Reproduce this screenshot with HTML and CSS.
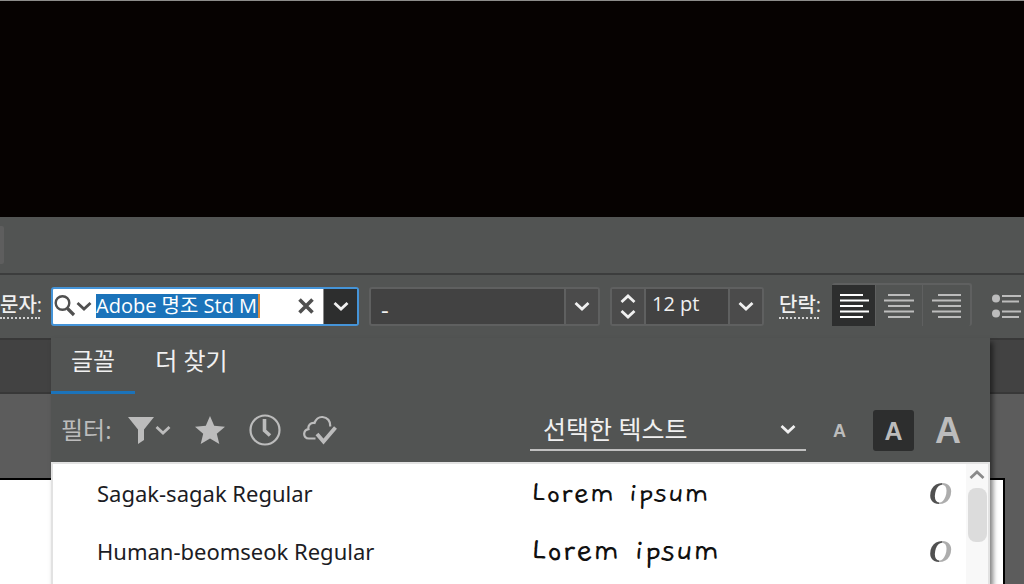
FILE: index.html
```html
<!DOCTYPE html>
<html lang="ko">
<head>
    <meta charset="UTF-8">
    <meta name="viewport" content="width=device-width, initial-scale=1.0">
    <title>글꼴</title>
    <link rel="stylesheet" href="styles.css">
</head>
<body>
    <svg class="defs" aria-hidden="true">
        <symbol id="down" viewBox="0 0 16 10">
            <path d="M1.5 2L8 8L14.5 2" fill="none" stroke="currentColor" stroke-width="2.8"/>
        </symbol>
        <symbol id="up" viewBox="0 0 16 10">
            <path d="M1.5 8L8 2L14.5 8" fill="none" stroke="currentColor" stroke-width="2.8"/>
        </symbol>
    </svg>
    <div class="backdrop"></div>
    <div class="appbar"><span class="handle"></span></div>
    <div class="toolbar">
        <label class="caption" for="font">문자:</label>
        <div class="field search">
            <button class="find" aria-label="검색 옵션">
                <svg width="22" height="24" viewBox="0 0 22 24" fill="none" stroke="#505050">
                    <circle cx="8.5" cy="9" r="6.8" stroke-width="2.4"/>
                    <path d="M13.5 14.5L20 21" stroke-width="3.2"/>
                </svg>
                <svg width="16" height="10"><use href="#down"/></svg>
            </button>
            <input class="font-name" id="font" type="text" value="Adobe 명조 Std M">
            <button class="clear" aria-label="지우기">
                <svg width="16" height="16" viewBox="0 0 16 16"><path d="M1.5 1.5L14.5 14.5M14.5 1.5L1.5 14.5" stroke="#505050" stroke-width="3.6"/></svg>
            </button>
            <button class="drop dark" aria-label="글꼴 목록"><svg width="16" height="10"><use href="#down"/></svg></button>
        </div>
        <div class="field style">
            <select aria-label="글꼴 스타일"><option>-</option></select>
            <span class="drop"><svg width="16" height="10"><use href="#down"/></svg></span>
        </div>
        <div class="field size">
            <div class="stepper">
                <button aria-label="크게"><svg width="16" height="10"><use href="#up"/></svg></button>
                <button aria-label="작게"><svg width="16" height="10"><use href="#down"/></svg></button>
            </div>
            <input type="text" value="12 pt" aria-label="글꼴 크기">
            <button class="drop" aria-label="크기 목록"><svg width="16" height="10"><use href="#down"/></svg></button>
        </div>
        <a class="caption" href="#">단락:</a>
        <div class="align">
            <button class="on" aria-label="왼쪽 정렬">
                <svg width="30" height="26" viewBox="0 0 30 26"><path d="M1 2H24M1 7.5H30M1 13H24M1 18.5H30M1 24H24" stroke="currentColor" stroke-width="2"/></svg>
            </button>
            <button aria-label="가운데 정렬">
                <svg width="30" height="26" viewBox="0 0 30 26"><path d="M4 2H26M0 7.5H30M4 13H26M0 18.5H30M4 24H26" stroke="currentColor" stroke-width="2"/></svg>
            </button>
            <button aria-label="오른쪽 정렬">
                <svg width="30" height="26" viewBox="0 0 30 26"><path d="M6 2H29M0 7.5H29M6 13H29M0 18.5H29M6 24H29" stroke="currentColor" stroke-width="2"/></svg>
            </button>
        </div>
        <button class="bullets" aria-label="글머리 기호">
            <svg width="30" height="26" viewBox="0 0 30 26">
                <g fill="currentColor"><circle cx="4" cy="5.5" r="4"/><circle cx="4" cy="20.5" r="4"/></g>
                <path d="M10 3H29M10 8.5H27M10 18.5H29M10 24H27" stroke="currentColor" stroke-width="2"/>
            </svg>
        </button>
    </div>
    <main class="workspace">
        <div class="doc-tabs"></div>
        <div class="canvas"><div class="artboard"></div></div>
        <section class="panel">
            <nav class="tabs">
                <a class="active" href="#fonts">글꼴</a>
                <a href="#more">더 찾기</a>
            </nav>
            <div class="filters">
                <span class="filter-label">필터:</span>
                <button class="funnel" aria-label="분류">
                    <svg width="26" height="28" viewBox="0 0 26 28"><path d="M0 1H26L16 13.5V24L10 28V13.5Z" fill="currentColor"/></svg>
                    <svg width="16" height="10"><use href="#down"/></svg>
                </button>
                <button class="star" aria-label="즐겨찾기">
                    <svg width="30" height="28" viewBox="0 0 30 28"><path d="M15 0L19.2 9.7L30 10.7L21.8 17.7L24.3 28L15 22.5L5.7 28L8.2 17.7L0 10.7L10.8 9.7Z" fill="currentColor"/></svg>
                </button>
                <button class="clock" aria-label="최근 사용">
                    <svg width="32" height="32" viewBox="0 0 32 32" fill="none" stroke="currentColor">
                        <circle cx="16" cy="16" r="14.5" stroke-width="2.2"/>
                        <path d="M15.5 5V16.5L21 21.5" stroke-width="3.6"/>
                    </svg>
                </button>
                <button class="cloud" aria-label="활성화됨">
                    <svg width="34" height="30" viewBox="0 0 34 30" fill="none" stroke="currentColor">
                        <path d="M12.5 23.5H6C2.5 23.5 1 21 1.2 18.5C1.5 16 3.5 14.5 5.5 14.2C4.7 10.5 7.500 7.500 11.500 8C13 4 16 1.8 19.5 2C24.5 2.2 27.5 6 27.2 11.5" stroke-width="2.2"/>
                        <path d="M14 19L20.5 26.5L32.5 12.5" stroke-width="3.8"/>
                    </svg>
                </button>
                <div class="sample-pick">
                    <select aria-label="샘플 텍스트"><option>선택한 텍스트</option></select>
                    <svg width="16" height="10"><use href="#down"/></svg>
                </div>
                <div class="zoom">
                    <button class="small" aria-label="작은 샘플">A</button>
                    <button class="medium" aria-label="중간 샘플">A</button>
                    <button class="large" aria-label="큰 샘플">A</button>
                </div>
            </div>
            <div class="list">
                <ul>
                    <li><span>Sagak-sagak Regular</span><span class="sample">Lorem ipsum</span><i>O</i></li>
                    <li><span>Human-beomseok Regular</span><span class="sample heavy">Lorem ipsum</span><i>O</i></li>
                </ul>
                <div class="scrollbar">
                    <svg width="16" height="10"><use href="#up"/></svg>
                    <div class="thumb"></div>
                </div>
            </div>
        </section>
    </main>
</body>
</html>
```
FILE: styles.css
```css
* {
    box-sizing: border-box;
}
body {
    margin: 0;
    height: 100vh;
    display: flex;
    flex-direction: column;
    overflow: hidden;
    font-family: "Open Sans", "Noto Sans CJK KR", sans-serif;
    color: #f0f0f0;
    background: #525453;
}
button, input, select {
    margin: 0;
    padding: 0;
    border: 0;
    border-radius: 0;
    background: none;
    color: inherit;
    font-family: inherit;
    appearance: none;
    outline: none;
}
button {
    display: flex;
    align-items: center;
    justify-content: center;
}
svg {
    display: block;
    flex: none;
}
.defs {
    position: absolute;
    width: 0;
    height: 0;
}
.backdrop {
    flex: none;
    height: 217px;
    background: #060201;
    border-top: 1px solid #8c8c8a;
}
.appbar {
    flex: none;
    height: 56px;
    display: flex;
    align-items: center;
}
.handle {
    width: 4px;
    height: 38px;
    background: #5e5e5e;
    border-radius: 0 2px 2px 0;
}

/* control bar */
.toolbar {
    flex: none;
    height: 65px;
    display: flex;
    align-items: center;
    padding-bottom: 1px;
    border-top: 2px solid #3c3d3d;
}
.caption {
    flex: none;
    width: 40px;
    margin-right: 11px;
    font-size: 20px;
    line-height: 24px;
    font-weight: 500;
    white-space: nowrap;
    color: inherit;
    text-decoration: none;
    border-bottom: 2px dotted #d0d0d0;
}
a.caption {
    margin: 0 13px 0 15px;
}
.field {
    flex: none;
    display: flex;
    height: 39px;
    border: 2px solid #5f6060;
    border-radius: 3px;
    background: #424242;
}
.drop {
    flex: none;
    width: 34px;
    display: flex;
    align-items: center;
    justify-content: center;
    border-left: 2px solid #5f6060;
    background: #4b4b4b;
}
.search {
    width: 308px;
    margin-right: 10px;
    border-color: #4594d8;
    background: #fff;
}
.find {
    width: 43px;
    padding-right: 4px;
    color: #505050;
}
.font-name {
    width: 164px;
    height: 24px;
    margin-top: 5px;
    padding-bottom: 2px;
    font-size: 20px;
    color: #fff;
    background: #1b73ba;
    border-right: 2px solid #d98b3c;
}
.clear {
    flex: 1;
    padding-left: 28px;
}
.dark {
    background: #2d2e2e;
    border-left: 1px solid #8a8a8a;
}
.style {
    width: 231px;
    margin-right: 10px;
}
.style select {
    flex: 1;
    padding: 4px 0 0 10px;
    font-size: 24px;
}
.size {
    width: 154px;
}
.stepper {
    width: 34px;
    display: flex;
    flex-direction: column;
    justify-content: space-evenly;
    align-items: center;
    border-right: 2px solid #5f6060;
    background: #4b4b4b;
}
.size input {
    flex: 1;
    min-width: 0;
    padding: 0 0 6px 6px;
    font-size: 20px;
}
.align {
    flex: none;
    align-self: flex-start;
    display: flex;
    height: 43px;
    margin: 8px 20px 0 0;
    border: 2px solid #5f6060;
    border-bottom: 0;
    border-left: 0;
    border-radius: 3px;
    color: #bcbcbc;
}
.align button {
    width: 47px;
    border-right: 1px solid #5f6060;
}
.align .on {
    width: 44px;
    background: #2d2e2e;
    color: #fff;
}
.align button:last-child {
    border-right: 0;
}
.bullets {
    flex: none;
    color: #bcbcbc;
}

/* document area */
.workspace {
    flex: 1;
    min-height: 0;
    position: relative;
    display: flex;
    flex-direction: column;
}
.doc-tabs {
    flex: none;
    height: 56px;
    background: #424242;
    border-top: 2px solid #383838;
    border-bottom: 2px solid #383838;
}
.canvas {
    flex: 1;
    display: flex;
    padding: 84px 19px 0 0;
    background: #5c5c5c;
}
.artboard {
    flex: 1;
    background: #fff;
    border: solid #000;
    border-width: 2px 2px 0 0;
}

/* font menu */
.panel {
    position: absolute;
    top: 0;
    bottom: 0;
    left: 51px;
    right: 34px;
    display: flex;
    flex-direction: column;
    background: #525453;
    box-shadow: 3px 4px 5px rgba(0, 0, 0, 0.5);
}
.tabs {
    flex: none;
    display: flex;
    height: 56px;
}
.tabs a {
    padding: 5px 20px 0;
    font-size: 24px;
    line-height: 36px;
    color: inherit;
    text-decoration: none;
}
.tabs .active {
    border-bottom: 3px solid #1b73ba;
}
.filters {
    flex: none;
    height: 68px;
    display: flex;
    align-items: center;
    padding: 4px 29px 0 10px;
    color: #bcbcbc;
}
.filter-label {
    width: 67px;
    font-size: 24px;
    line-height: 36px;
}
.funnel {
    gap: 1px;
    margin-right: 24px;
}
.star {
    margin-right: 24px;
}
.clock {
    margin-right: 22px;
}
.sample-pick {
    display: flex;
    align-items: center;
    width: 276px;
    height: 42px;
    margin-left: auto;
    margin-right: 27px;
    padding-right: 10px;
    color: #f0f0f0;
    border-bottom: 2px solid #c0c0c0;
}
.sample-pick select {
    flex: 1;
    padding-left: 13px;
    font-size: 25px;
}
.zoom {
    display: flex;
    align-items: center;
}
.zoom button {
    height: 41px;
    padding-top: 2px;
    border-radius: 3px;
    font-family: "Liberation Sans", sans-serif;
    font-weight: bold;
}
.zoom .small {
    width: 13px;
    margin-right: 27px;
    font-size: 18px;
}
.zoom .medium {
    width: 41px;
    margin-right: 21px;
    font-size: 25px;
    background: #2d2e2e;
}
.zoom .large {
    width: 26px;
    font-size: 36px;
}
.list {
    flex: 1;
    min-height: 0;
    overflow: hidden;
    display: flex;
    background: #fff;
    border: 2px solid #e2e2e2;
    border-bottom: 0;
    color: #1c1c24;
}
.list ul {
    flex: 1;
    margin: 0;
    padding: 0 14px 0 44px;
    list-style: none;
}
.list li {
    display: grid;
    grid-template-columns: 434px 1fr auto;
    align-items: center;
    height: 58px;
    font-family: "Noto Sans", sans-serif;
    font-size: 22px;
    white-space: nowrap;
}
.sample {
    font-family: "Gaegu", "Nanum Pen Script", "Lato", sans-serif;
    font-size: 34px;
    line-height: 40px;
    color: #111;
}
.heavy {
    font-size: 36px;
    font-weight: 500;
}
.list i {
    font-family: "Liberation Serif", serif;
    font-size: 32px;
    font-weight: bold;
    background: linear-gradient(100deg, #505050 50%, #adadad 50%);
    background-clip: text;
    -webkit-background-clip: text;
    color: transparent;
}
.scrollbar {
    width: 22px;
    display: flex;
    flex-direction: column;
    align-items: center;
    gap: 8px;
    padding-top: 6px;
    background: #f8f8f8;
    color: #8a8a8a;
}
.thumb {
    width: 19px;
    height: 54px;
    border-radius: 8px;
    background: #dcdcdc;
}
```
